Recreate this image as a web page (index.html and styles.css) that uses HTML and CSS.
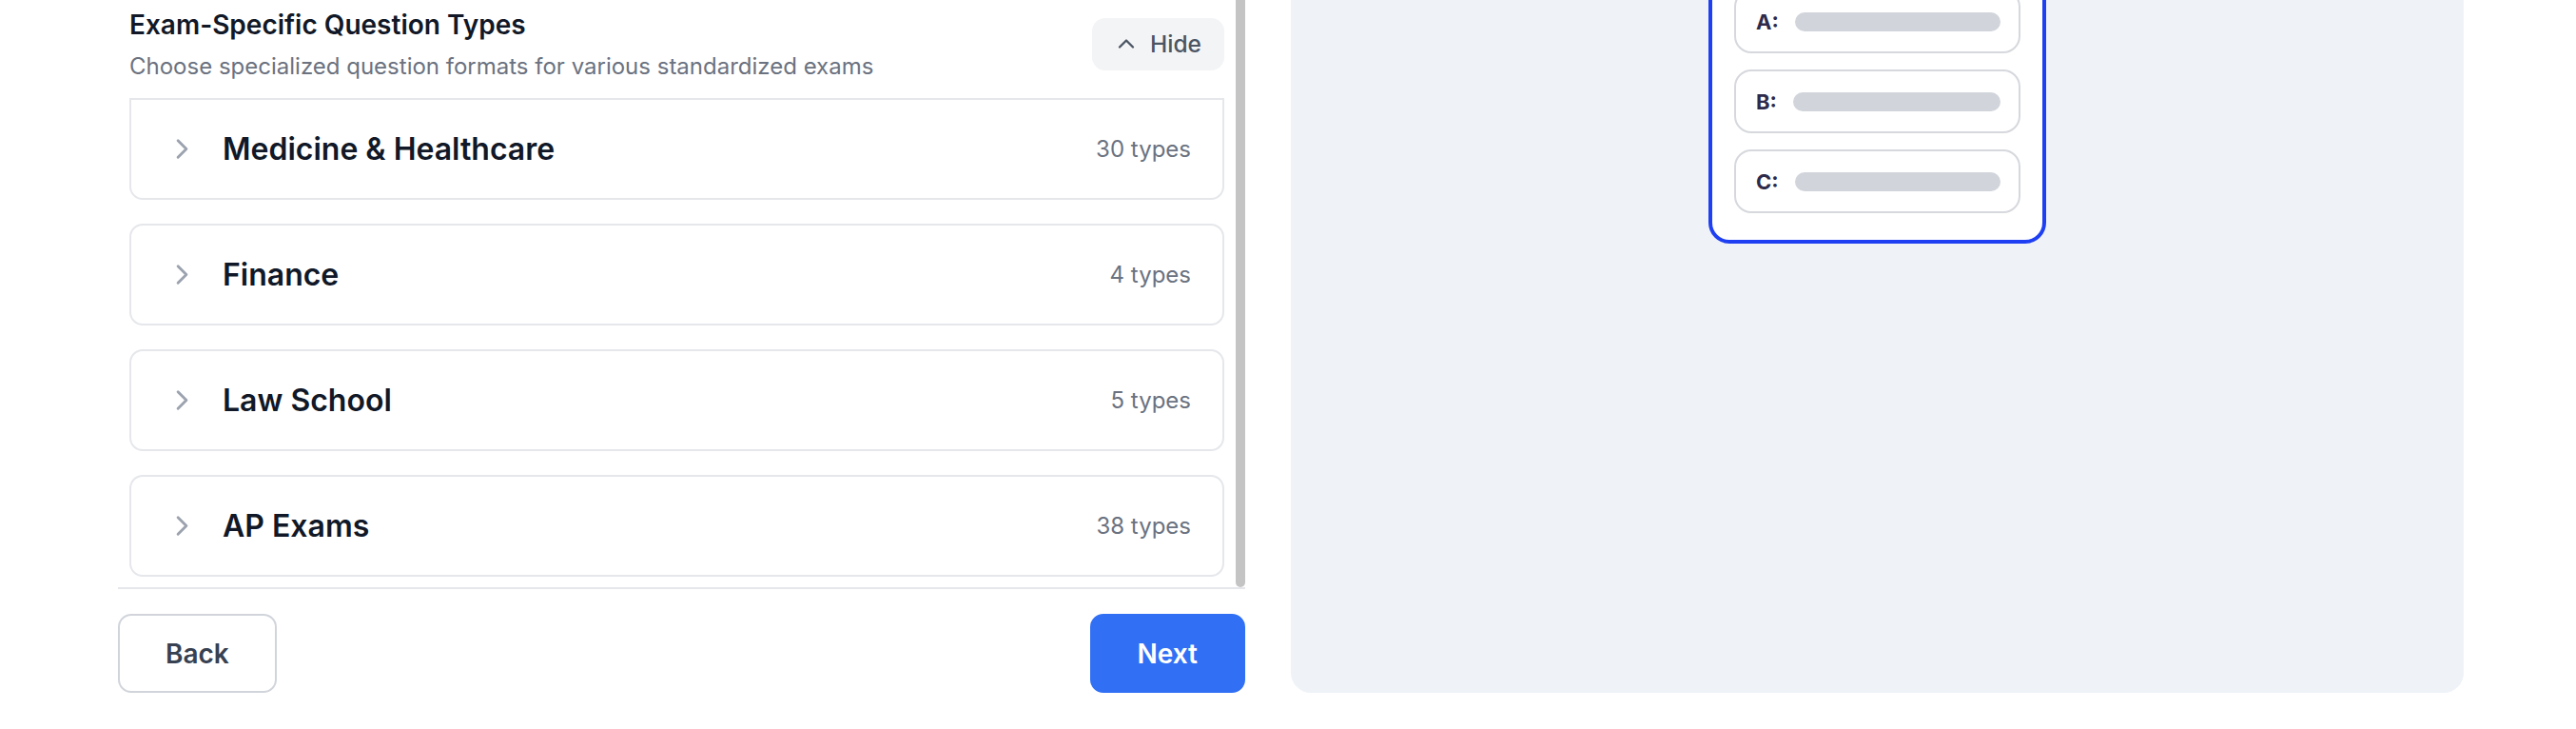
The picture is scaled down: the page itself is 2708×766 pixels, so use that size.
FILE: index.html
```html
<!DOCTYPE html>
<html lang="en">
<head>
    <meta charset="UTF-8">
    <meta name="viewport" content="width=device-width, initial-scale=1.0">
    <title>Exam-Specific Question Types</title>
    <link rel="stylesheet" href="styles.css">
</head>
<body>
    <div class="wizard">
        <div class="left-col">
            <div class="scroll-area">
                <div class="scroll-content">
                    <div class="section-head">
                        <div>
                            <h2 class="section-title">Exam-Specific Question Types</h2>
                            <p class="section-sub">Choose specialized question formats for various standardized exams</p>
                        </div>
                        <button class="hide-btn">
                            <svg viewBox="0 0 24 24" width="28" height="28" fill="none" stroke="currentColor" stroke-width="2" stroke-linecap="round" stroke-linejoin="round"><path d="m18 15-6-6-6 6"/></svg>
                            Hide
                        </button>
                    </div>

                    <div class="categories">
                        <div class="category first">
                            <svg class="chevron" viewBox="0 0 24 24" width="35" height="35" fill="none" stroke="currentColor" stroke-width="2" stroke-linecap="round" stroke-linejoin="round"><path d="m9 18 6-6-6-6"/></svg>
                            <span class="category-name">Medicine &amp; Healthcare</span>
                            <span class="category-count">30 types</span>
                        </div>
                        <div class="category">
                            <svg class="chevron" viewBox="0 0 24 24" width="35" height="35" fill="none" stroke="currentColor" stroke-width="2" stroke-linecap="round" stroke-linejoin="round"><path d="m9 18 6-6-6-6"/></svg>
                            <span class="category-name">Finance</span>
                            <span class="category-count">4 types</span>
                        </div>
                        <div class="category">
                            <svg class="chevron" viewBox="0 0 24 24" width="35" height="35" fill="none" stroke="currentColor" stroke-width="2" stroke-linecap="round" stroke-linejoin="round"><path d="m9 18 6-6-6-6"/></svg>
                            <span class="category-name">Law School</span>
                            <span class="category-count">5 types</span>
                        </div>
                        <div class="category">
                            <svg class="chevron" viewBox="0 0 24 24" width="35" height="35" fill="none" stroke="currentColor" stroke-width="2" stroke-linecap="round" stroke-linejoin="round"><path d="m9 18 6-6-6-6"/></svg>
                            <span class="category-name">AP Exams</span>
                            <span class="category-count">38 types</span>
                        </div>
                    </div>
                </div>
                <div class="scrollbar"><div class="scrollbar-thumb"></div></div>
            </div>

            <div class="footer">
                <button class="btn btn-back">Back</button>
                <button class="btn btn-next">Next</button>
            </div>
        </div>

        <div class="preview-panel">
            <div class="preview-card">
                <div class="option">
                    <span class="option-label">A:</span>
                    <span class="option-bar"></span>
                </div>
                <div class="option">
                    <span class="option-label">B:</span>
                    <span class="option-bar"></span>
                </div>
                <div class="option">
                    <span class="option-label">C:</span>
                    <span class="option-bar"></span>
                </div>
            </div>
        </div>
    </div>
</body>
</html>
```

FILE: styles.css
```css
body {
    margin: 0;
    background: #ffffff;
    font-family: Inter, "Noto Sans", Arial, sans-serif;
    color: #111827;
}
button {
    font-family: inherit;
    cursor: pointer;
}
.wizard {
    display: flex;
    gap: 48px;
    padding-left: 124px;
    height: 766px;
}
.left-col {
    width: 1185px;
    display: flex;
    flex-direction: column;
}
.scroll-area {
    height: 617px;
    display: flex;
}
.scroll-content {
    flex: 1;
    padding: 0 12px;
}
.scrollbar {
    width: 10px;
    display: flex;
}
.scrollbar-thumb {
    flex: 1;
    background: #c4c4c4;
    border-radius: 0 0 5px 5px;
}
.section-head {
    display: flex;
    justify-content: space-between;
    align-items: center;
    padding-top: 5px;
}
.section-title {
    margin: 0;
    font-size: 28px;
    line-height: 42px;
    font-weight: 600;
    color: #111827;
}
.section-sub {
    margin: 5px 0 0;
    font-size: 24px;
    line-height: 35px;
    color: #6b7280;
}
.hide-btn {
    display: flex;
    align-items: center;
    gap: 11px;
    height: 55px;
    padding: 0 24px 0 22px;
    border: none;
    border-radius: 14px;
    background: #f3f4f6;
    color: #4b5563;
    font-size: 24.5px;
    font-weight: 500;
}
.categories {
    margin-top: 16px;
    display: flex;
    flex-direction: column;
    gap: 25px;
}
.category {
    display: flex;
    align-items: center;
    gap: 25px;
    height: 107px;
    box-sizing: border-box;
    padding: 0 33px 0 36px;
    border: 2px solid #e5e7eb;
    border-radius: 14px;
    background: #ffffff;
}
.category.first {
    border-top-left-radius: 0;
    border-top-right-radius: 0;
}
.chevron {
    color: #9ca3af;
    flex-shrink: 0;
}
.category-name {
    flex: 1;
    font-size: 32px;
    font-weight: 600;
    color: #111827;
}
.category-count {
    font-size: 24px;
    color: #6b7280;
}
.footer {
    display: flex;
    justify-content: space-between;
    border-top: 2px solid #e5e7eb;
    padding-top: 26px;
}
.btn {
    height: 83px;
    padding: 0 48px;
    border-radius: 14px;
    font-size: 28px;
    font-weight: 600;
}
.btn-back {
    background: #ffffff;
    border: 2px solid #d1d5db;
    color: #374151;
}
.btn-next {
    background: #3170f4;
    border: 2px solid #3170f4;
    color: #ffffff;
}
.preview-panel {
    width: 1233px;
    height: 728px;
    background: #eff3f8;
    border-radius: 0 0 21px 21px;
    display: flex;
    justify-content: center;
    align-items: flex-start;
    overflow: hidden;
}
.preview-card {
    width: 355px;
    box-sizing: border-box;
    margin-top: -43px;
    padding: 28px 23px 28px;
    border: 4px solid #1f40f2;
    border-radius: 22px;
    background: #ffffff;
    display: flex;
    flex-direction: column;
    gap: 17px;
}
.option {
    display: flex;
    align-items: center;
    gap: 17px;
    height: 67px;
    box-sizing: border-box;
    padding: 0 19px 0 21px;
    border: 2px solid #d6d8dd;
    border-radius: 18px;
}
.option-label {
    font-size: 22px;
    font-weight: 700;
    color: #2d2a4a;
}
.option-bar {
    flex: 1;
    height: 20px;
    border-radius: 10px;
    background: #d1d5db;
}
```
